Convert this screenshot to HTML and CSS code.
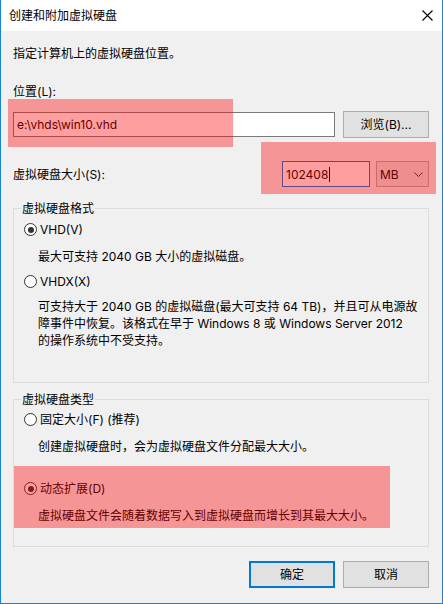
FILE: index.html
```html
<!DOCTYPE html>
<html lang="zh-CN">
<head>
<meta charset="utf-8">
<title>创建和附加虚拟硬盘</title>
<link rel="stylesheet" href="styles.css">
</head>
<body>
<div class="window">
  <div class="titlebar">
    <span class="title">创建和附加虚拟硬盘</span>
    <svg class="close" width="11" height="11" viewBox="0 0 11 11"><path d="M0.5 0.5 L10.5 10.5 M10.5 0.5 L0.5 10.5" stroke="#000" stroke-width="1.1" fill="none"/></svg>
  </div>
  <div class="content">
    <p class="intro">指定计算机上的虚拟硬盘位置。</p>
    <p class="loc-label">位置(L):</p>
    <div class="loc-row">
      <div class="textbox path">e:\vhds\win10.vhd</div>
      <div class="btn">浏览(B)...</div>
    </div>
    <div class="size-row">
      <span class="size-label">虚拟硬盘大小(S):</span>
      <div class="textbox size">102408<span class="caret"></span></div>
      <div class="combo"><span>MB</span><svg width="9" height="5" viewBox="0 0 9 5"><path d="M0.5 0.5 L4.5 4.5 L8.5 0.5" stroke="#333" stroke-width="1" fill="none"/></svg></div>
    </div>
    <fieldset class="group g1">
      <legend>虚拟硬盘格式</legend>
      <div class="radio r1"><span class="dot checked"></span>VHD(V)</div>
      <p class="desc d1">最大可支持 2040 GB 大小的虚拟磁盘。</p>
      <div class="radio r2"><span class="dot"></span>VHDX(X)</div>
      <p class="desc d2">可支持大于 2040 GB 的虚拟磁盘(最大可支持 64 TB)，并且可从电源故<br>障事件中恢复。该格式在早于 Windows 8 或 Windows Server 2012<br>的操作系统中不受支持。</p>
    </fieldset>
    <fieldset class="group g2">
      <legend>虚拟硬盘类型</legend>
      <div class="radio r3"><span class="dot"></span>固定大小(F) (推荐)</div>
      <p class="desc d3">创建虚拟硬盘时，会为虚拟硬盘文件分配最大大小。</p>
      <div class="radio r4"><span class="dot checked"></span>动态扩展(D)</div>
      <p class="desc d4">虚拟硬盘文件会随着数据写入到虚拟硬盘而增长到其最大大小。</p>
    </fieldset>
    <div class="buttons">
      <div class="btn default">确定</div>
      <div class="btn">取消</div>
    </div>
  </div>
  <div class="hl hl1"></div>
  <div class="hl hl2"></div>
  <div class="hl hl3"></div>
</div>
</body>
</html>
```

FILE: styles.css
```css
html, body {
  margin: 0;
  padding: 0;
  background: #f0f0f0;
}
body {
  font-family: Inter, "Noto Sans CJK SC", sans-serif;
  font-size: 12px;
  line-height: 17px;
  color: #000;
}
.window {
  position: relative;
  width: 443px;
  height: 604px;
  box-sizing: border-box;
  border: 1px solid #1883d7;
  border-top: none;
  background: #f0f0f0;
  overflow: hidden;
}
.titlebar {
  height: 31px;
  background: #fff;
  display: flex;
  align-items: center;
  justify-content: space-between;
  padding: 0 9px 0 8px;
}
.title {
  line-height: 17px;
  margin-top: -1px;
}
.close {
  display: block;
  margin-top: -1px;
}
.content {
  padding: 0 13px 0 12px;
}
p {
  margin: 0;
}
.intro {
  margin-top: 14px;
}
.loc-label {
  margin-top: 21px;
}
.loc-row {
  margin-top: 11px;
  display: flex;
  align-items: center;
  gap: 8px;
  height: 27px;
}
.textbox {
  box-sizing: border-box;
  background: #fff;
  border: 1px solid #7a7a7a;
  padding-left: 3px;
  display: flex;
  align-items: center;
}
.path {
  flex: 1;
  height: 25px;
}
.btn {
  box-sizing: border-box;
  width: 86px;
  height: 27px;
  background: #e1e1e1;
  border: 1px solid #adadad;
  display: flex;
  align-items: center;
  justify-content: center;
}
.size-row {
  margin-top: 23px;
  display: flex;
  align-items: center;
  height: 26px;
}
.size-label {
  flex: 1;
}
.size {
  width: 88px;
  height: 26px;
  border-color: #0078d7;
}
.caret {
  display: inline-block;
  width: 1px;
  height: 15px;
  background: #000;
  margin-left: 1px;
}
.combo {
  box-sizing: border-box;
  width: 53px;
  height: 26px;
  margin-left: 6px;
  background: #e5e5e5;
  border: 1px solid #adadad;
  display: flex;
  align-items: center;
  justify-content: space-between;
  padding: 0 5px 0 3px;
}
.combo svg {
  display: block;
}
.group {
  margin: 0;
  min-width: 0;
  border: 1px solid #dcdcdc;
  padding: 0;
}
.group legend {
  margin-left: 7px;
  padding: 0 1px;
  line-height: 17px;
}
.g1 {
  margin-top: 13px;
  padding-bottom: 33px;
}
.g2 {
  margin-top: 8px;
  padding-bottom: 22px;
}
.radio {
  display: flex;
  align-items: center;
  height: 17px;
  padding-left: 10px;
}
.dot {
  box-sizing: border-box;
  width: 13px;
  height: 13px;
  border: 1px solid #333;
  border-radius: 50%;
  background: #fff;
  margin-right: 3px;
  position: relative;
  flex: none;
}
.dot.checked::after {
  content: "";
  position: absolute;
  left: 2.5px;
  top: 2.5px;
  width: 6px;
  height: 6px;
  border-radius: 50%;
  background: #333;
}
.desc {
  padding-left: 24px;
}
.r1 { margin-top: 4px; }
.d1 { margin-top: 10px; }
.r2 { margin-top: 8px; }
.d2 { margin-top: 8px; }
.r3 { margin-top: 3px; }
.d3 { margin-top: 10px; }
.r4 { margin-top: 25px; }
.d4 { margin-top: 10px; }
.buttons {
  margin-top: 14px;
  display: flex;
  justify-content: flex-end;
  gap: 8px;
}
.btn.default {
  border: 2px solid #0078d7;
}
.hl {
  position: absolute;
  background: rgba(255, 0, 0, 0.38);
}
.hl1 { left: 7px; top: 99px; width: 225px; height: 48px; }
.hl2 { left: 260px; top: 142px; width: 175px; height: 52px; }
.hl3 { left: 13px; top: 466px; width: 376px; height: 62px; }
```
